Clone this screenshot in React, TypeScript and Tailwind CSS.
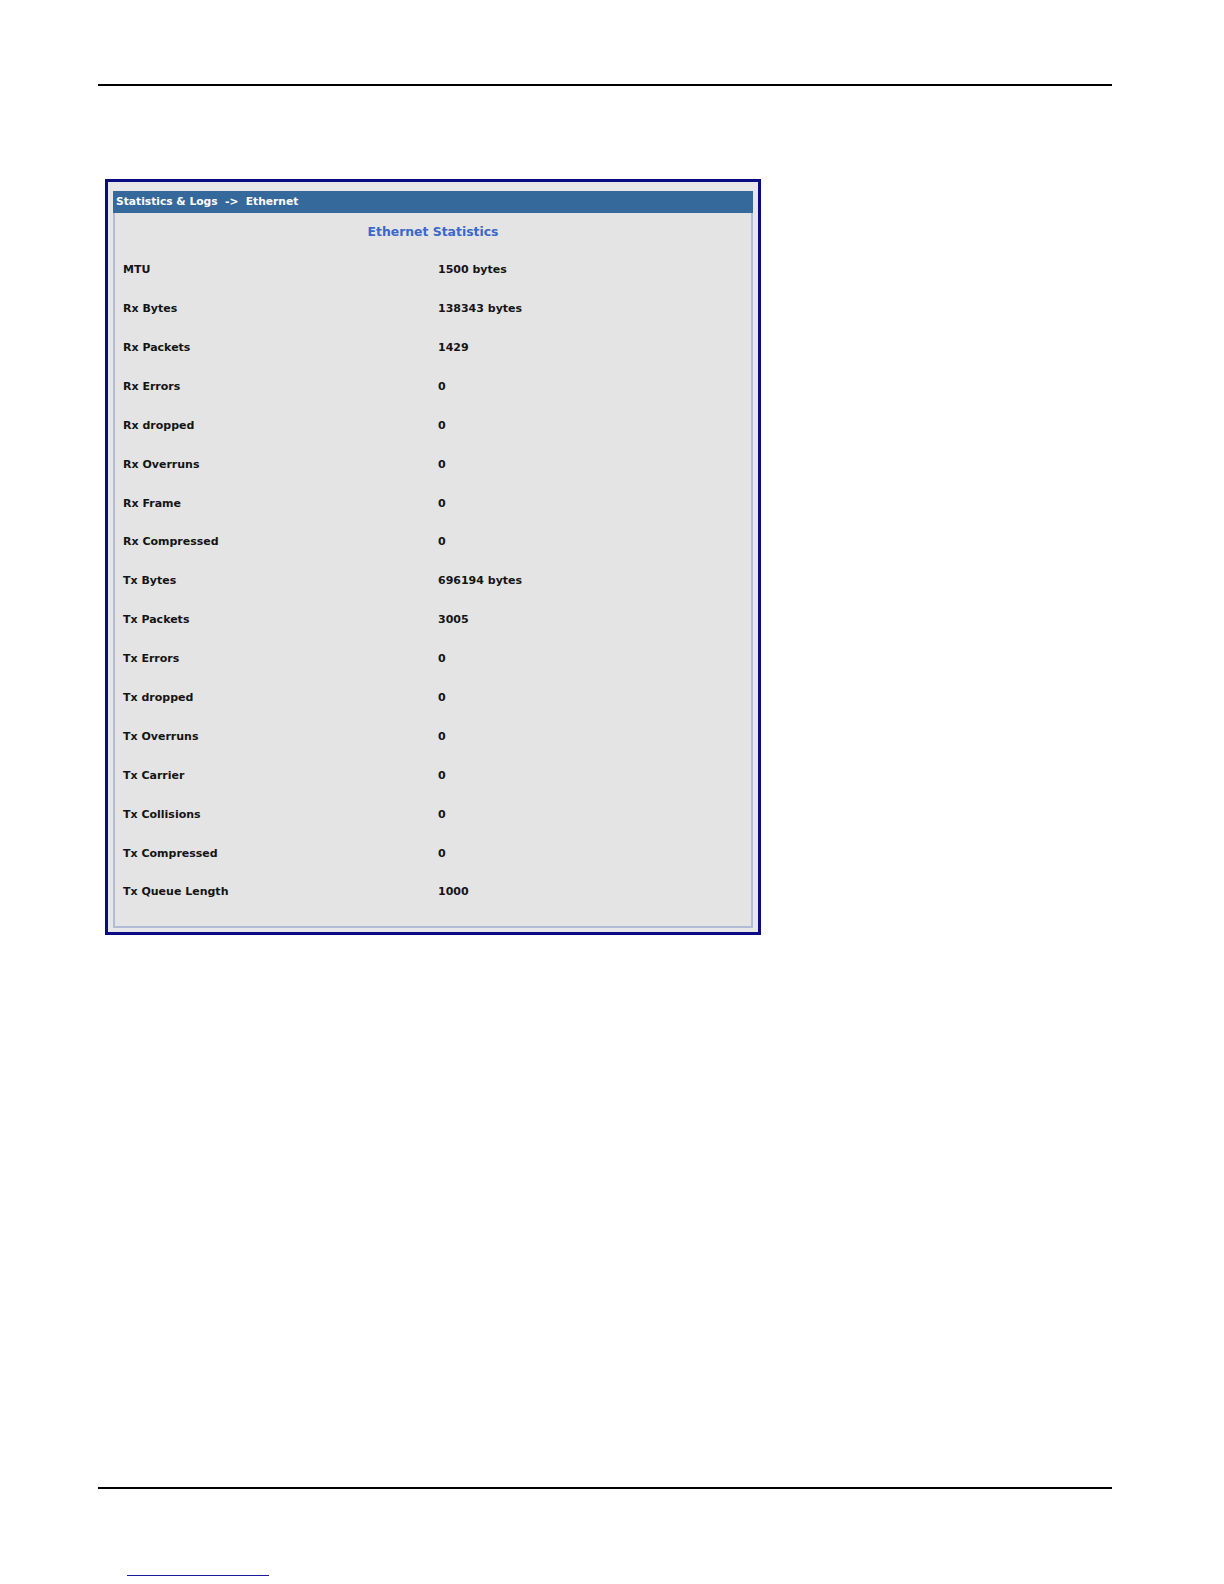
import React from 'react';

const stats: [string, string][] = [
  ['MTU', '1500 bytes'],
  ['Rx Bytes', '138343 bytes'],
  ['Rx Packets', '1429'],
  ['Rx Errors', '0'],
  ['Rx dropped', '0'],
  ['Rx Overruns', '0'],
  ['Rx Frame', '0'],
  ['Rx Compressed', '0'],
  ['Tx Bytes', '696194 bytes'],
  ['Tx Packets', '3005'],
  ['Tx Errors', '0'],
  ['Tx dropped', '0'],
  ['Tx Overruns', '0'],
  ['Tx Carrier', '0'],
  ['Tx Collisions', '0'],
  ['Tx Compressed', '0'],
  ['Tx Queue Length', '1000'],
];

const App: React.FC = () => {
  return (
    <div className="w-full bg-white font-['DejaVu_Sans',sans-serif] flex flex-col">
      {/* Top rule */}
      <div className="ml-[98px] mt-[84px] w-[1014px] border-t-2 border-black" />

      {/* Screenshot frame */}
      <div className="ml-[105px] mt-[93px] w-[656px] border-[3px] border-[#0b0b84] bg-[#e7e7e9] pt-[9px] pb-[4px] px-[5px]">
        <div className="h-[22px] bg-[#35699b] flex items-center pl-[3px] text-white text-[10.7px] font-bold whitespace-pre">
          {'Statistics & Logs  ->  Ethernet'}
        </div>
        <div className="border-2 border-t-0 border-[#b3bcd7] bg-[#e4e4e4] pb-[14px]">
          <div className="h-[38px] flex items-center justify-center text-[12.4px] font-bold text-[#3b67c9]">
            Ethernet Statistics
          </div>
          {stats.map(([label, value]) => (
            <div key={label} className="h-[38.9px] flex items-center text-[11px] font-bold text-[#141414]">
              <div className="w-[323px] pl-[8px]">{label}</div>
              <div>{value}</div>
            </div>
          ))}
        </div>
      </div>

      {/* Bottom rule */}
      <div className="ml-[98px] mt-[552px] w-[1014px] border-t-2 border-black" />

      {/* Footer link underline */}
      <div className="ml-[127px] mt-[86px] w-[142px] border-t border-[#1a1aa0]" />
    </div>
  );
};

export default App;
